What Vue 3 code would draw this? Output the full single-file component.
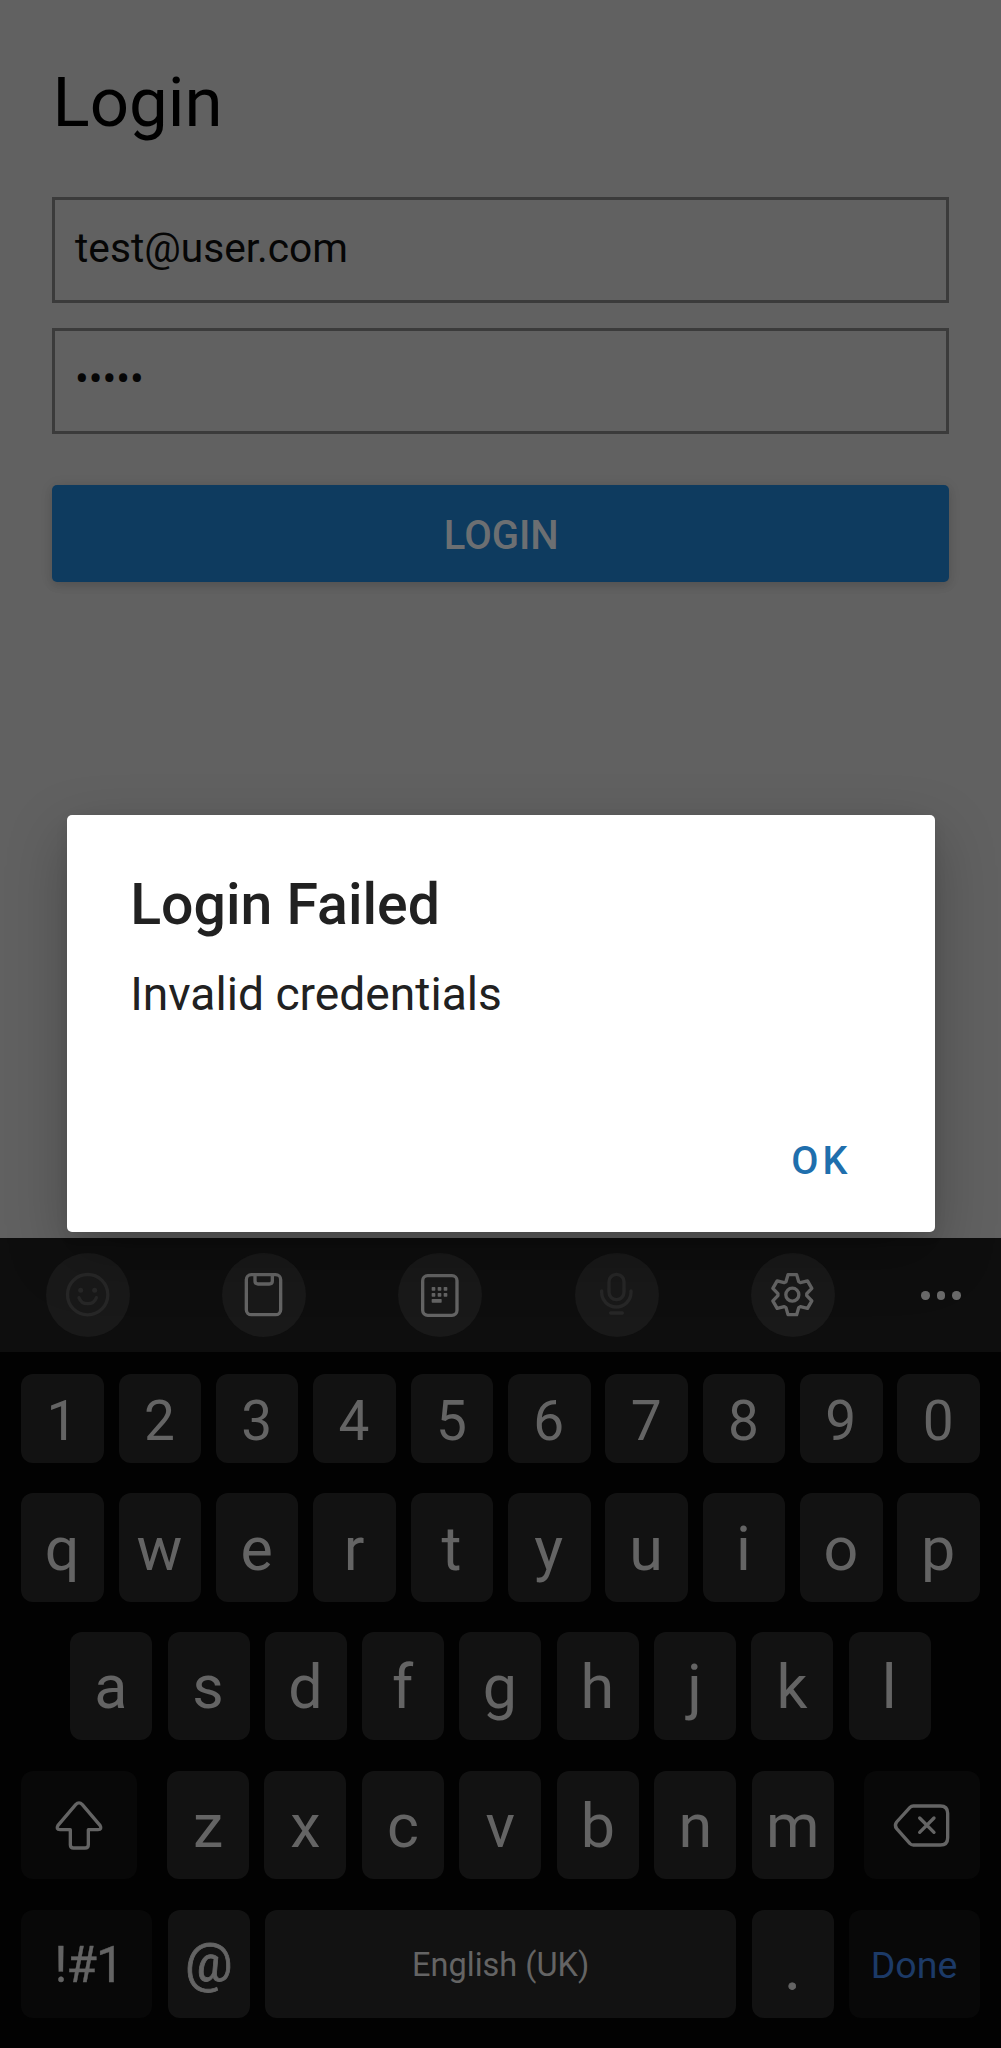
<script setup>
const digits = [...'1234567890']
const top = [...'qwertyuiop']
const home = [...'asdfghjkl']
const bottom = [...'zxcvbnm']

// Six-toothed outline centred on (125, 125)
const tooth = [[-13, -60], [13, -60], [19, -39], [24.1, -36]]
const gear = Array.from({ length: 6 }, (_, k) => {
  const a = (k * Math.PI) / 3
  return tooth.map(([x, y]) =>
    `${(124 + x * Math.cos(a) - y * Math.sin(a)).toFixed(1)},${(125 + x * Math.sin(a) + y * Math.cos(a)).toFixed(1)}`
  ).join(' ')
}).join(' ')
</script>

<template>
  <div class="screen">
    <main class="login">
      <h1>Login</h1>
      <div class="field email"><span>test@user.com</span></div>
      <div class="field password"><span>•••••</span></div>
      <button class="submit"><span>LOGIN</span></button>
    </main>

    <section class="keyboard">
      <div class="toolbar">
        <div class="tool dim">
          <svg viewBox="0 0 252 252">
            <circle cx="125" cy="125" r="60.500" />
            <g class="solid"><circle cx="104" cy="112" r="7.500" /><circle cx="146" cy="112" r="7.500" /></g>
            <path d="M99 134 Q105 152 125 152 Q145 152 151 134" />
          </svg>
        </div>
        <div class="tool">
          <svg viewBox="0 0 252 252">
            <rect x="73" y="65" width="103" height="120" rx="15" />
            <path d="M99 65 V84 Q99 93 108 93 H142 Q151 93 151 84 V65" />
          </svg>
        </div>
        <div class="tool">
          <svg viewBox="0 0 252 252">
            <rect x="74" y="68" width="103" height="119" rx="15" />
            <g class="solid">
              <template v-for="y in [107, 125]" :key="y">
                <rect v-for="x in [106, 124, 142]" :key="x" :x="x - 5" :y="y - 5" width="11" height="11" rx="2" />
              </template>
              <rect x="101" y="138" width="30" height="11" rx="2" />
            </g>
          </svg>
        </div>
        <div class="tool dim">
          <svg viewBox="0 0 252 252">
            <rect x="102" y="64" width="45" height="76" rx="22" />
            <path d="M80 114 V118 A44 44 0 0 0 168 118 V114 M107 180 H142" />
          </svg>
        </div>
        <div class="tool">
          <svg viewBox="0 0 252 252">
            <polygon :points="gear" />
            <circle cx="124" cy="125" r="19.500" />
          </svg>
        </div>
        <div class="more"><i /><i /><i /></div>
      </div>

      <div class="row numbers"><div v-for="k in digits" :key="k" class="key"><span>{{ k }}</span></div></div>
      <div class="row qwerty"><div v-for="k in top" :key="k" class="key"><span>{{ k }}</span></div></div>
      <div class="row home"><div v-for="k in home" :key="k" class="key"><span>{{ k }}</span></div></div>
      <div class="row lower">
        <div class="key fn shift">
          <svg viewBox="64 62 348 324">
            <path d="M228 163 Q238 152 248 163 L301 225 Q308 238 295 238 H266 V283 Q266 293 256 293 H222 Q212 293 212 283 V238 H181 Q168 238 175 225 Z" />
          </svg>
        </div>
        <div v-for="k in bottom" :key="k" class="key"><span>{{ k }}</span></div>
        <div class="key fn erase">
          <svg viewBox="1093 62 346 324">
            <path d="M1240 167 H1321 Q1343 167 1343 189 V262 Q1343 284 1321 284 H1240 Q1234 284 1230 280 L1190 235 Q1182 225 1190 215 L1230 171 Q1234 167 1240 167 Z M1259 203 L1302 246 M1302 203 L1259 246" />
          </svg>
        </div>
      </div>
      <div class="row last">
        <div class="key fn sym"><span>!#1</span></div>
        <div class="key at"><span>@</span></div>
        <div class="key space"><span>English (UK)</span></div>
        <div class="key dot"><span>.</span></div>
        <div class="key fn done"><span>Done</span></div>
      </div>
    </section>

    <div class="overlay">
      <div class="dialog" role="alertdialog">
        <h2>Login Failed</h2>
        <p>Invalid credentials</p>
        <button><span>OK</span></button>
      </div>
    </div>
  </div>
</template>

<style>
body { margin: 0; background: #020202; }
</style>

<style scoped>
* { box-sizing: border-box; }
.screen {
  position: relative;
  display: flex;
  flex-direction: column;
  width: 1001px;
  height: 2048px;
  overflow: hidden;
  font-family: Roboto, sans-serif;
}
span { display: block; white-space: nowrap; }
button { border: 0; padding: 0; font-family: inherit; }

.login {
  height: 1238px;
  padding: 62px 52px 0 51.500px;
  background: #616161;
}
h1 {
  margin: 0 0 53px;
  padding-left: 1px;
  height: 82px;
  line-height: 82px;
  font-size: 69px;
  font-weight: 400;
  color: #000;
}
.field {
  height: 106px;
  border: 3px solid #3b3b3b;
  padding-left: 20.500px;
  font-size: 40.700px;
  line-height: 96px;
  color: #060606;
}
.email { margin-bottom: 25px; }
.password { padding-left: 20.500px; line-height: 96px; }
.submit {
  display: block;
  width: 100%;
  height: 97px;
  margin-top: 51px;
  border-radius: 5px;
  background: #0e3b5f;
  box-shadow: 0 4px 8px rgba(0, 0, 0, .1), 0 1px 14px rgba(0, 0, 0, .08);
  color: #6c6f72;
  font-size: 40px;
  font-weight: 500;
  line-height: 102px;
}
.submit span { padding-left: 2px; }

.keyboard { flex: 1; background: #020202; }
.toolbar {
  display: flex;
  align-items: center;
  gap: 92.200px;
  height: 114px;
  padding-left: 46px;
  background: #0e0e0e;
}
.tool {
  flex: none;
  width: 84px;
  height: 84px;
  margin-top: -1px;
  border-radius: 50%;
  background: #191919;
  color: #646464;
}
.tool.dim { color: #272727; }
svg {
  display: block;
  width: 100%;
  height: 100%;
  fill: none;
  stroke: currentColor;
  stroke-width: 10;
  stroke-linecap: round;
  stroke-linejoin: round;
}
.solid { fill: currentColor; stroke: none; }
.more { display: flex; gap: 7px; margin: 1px 0 0 -5.500px; }
.more i { width: 8.400px; height: 8.400px; border-radius: 50%; background: #6a6a6a; }

.row { display: flex; justify-content: space-between; padding: 0 21px 0 21.300px; height: 108px; }
.key {
  flex: none;
  width: 82px;
  border-radius: 12px;
  background: #121212;
  color: #646464;
  text-align: center;
  font-size: 61px;
  line-height: 110px;
}
.fn { background: #080808; }
.numbers { height: 89px; margin-top: 21.700px; }
.numbers .key, .qwerty .key { width: 82.500px; }
.numbers .key { font-size: 55px; line-height: 95px; }
.qwerty { height: 109.300px; margin-top: 30.300px; }
.qwerty .key { line-height: 112px; }
.qwerty span, .numbers span, .home span { margin-left: -1px; }
.home { margin-top: 30.200px; padding: 0 70.300px 0 70.300px; }
.home .key { line-height: 110px; }
.lower { margin-top: 30.400px; justify-content: flex-start; gap: 15.450px; }
.lower .key { line-height: 111px; }
.lower .fn { width: 116px; }
.shift { margin-right: 14.300px; }
.erase { margin-left: 14.500px; }
.last { margin-top: 31px; }
.last .sym { width: 131px; padding-left: 4px; font-size: 49.500px; line-height: 110px; letter-spacing: -.8px; -webkit-text-stroke: .4px currentColor; }
.last .at { font-size: 53px; line-height: 107px; -webkit-text-stroke: .8px currentColor; }
.last .space { width: 471px; font-size: 32.500px; line-height: 111px; }
.last .dot { line-height: 117px; -webkit-text-stroke: .8px currentColor; }
.last .done { width: 131px; font-size: 37.500px; line-height: 111px; color: #1c3a67; }
.done span { margin-left: -1px; }

.overlay {
  position: absolute;
  top: 815px;
  left: 0;
  right: 0;
  display: flex;
  justify-content: center;
}
.dialog {
  width: 868px;
  height: 417px;
  padding: 53px 62px 0 63.700px;
  border-radius: 5px;
  background: #fff;
  box-shadow: 0 22px 60px rgba(0, 0, 0, .25), 0 4px 14px rgba(0, 0, 0, .06);
  color: #212121;
}
h2 { margin: 0; font-size: 57.200px; font-weight: 500; line-height: 74px; }
p { margin: 21px 0 0; font-size: 46.200px; line-height: 62px; }
.dialog button {
  display: block;
  margin: 106px 21px 0 auto;
  background: none;
  color: #1f6fad;
  font-size: 39.500px;
  font-weight: 500;
  line-height: 60px;
  letter-spacing: 4px;
}
</style>
